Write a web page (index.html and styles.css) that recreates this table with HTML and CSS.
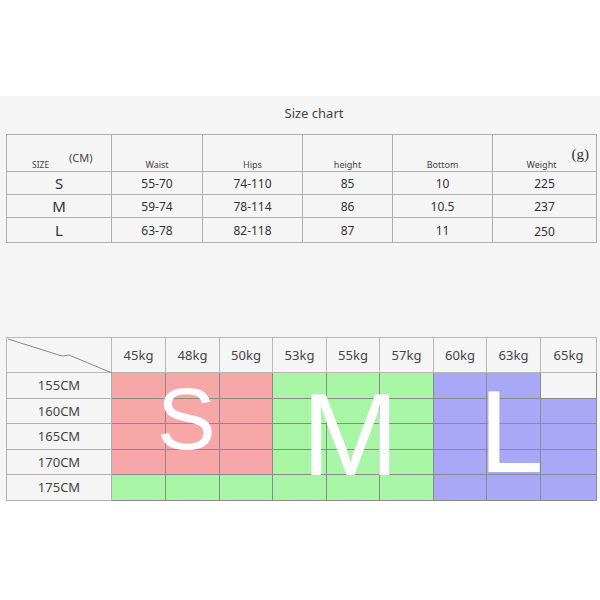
FILE: index.html
```html
<!DOCTYPE html>
<html>
<head>
<meta charset="utf-8">
<link rel="stylesheet" href="styles.css">
</head>
<body>
<div class="band">
  <div class="title">Size chart</div>
  <table class="spec">
    <colgroup>
      <col class="c1"><col class="c2"><col class="c3"><col class="c4"><col class="c5"><col class="c6">
    </colgroup>
    <tr class="head">
      <th><span class="size">SIZE</span><span class="cm">(CM)</span></th>
      <th>Waist</th>
      <th>Hips</th>
      <th>height</th>
      <th>Bottom</th>
      <th><span class="wt">Weight</span><span class="gunit">(g)</span></th>
    </tr>
    <tr class="r1"><td class="sz">S</td><td>55-70</td><td>74-110</td><td>85</td><td>10</td><td>225</td></tr>
    <tr class="r2"><td class="sz">M</td><td>59-74</td><td>78-114</td><td>86</td><td>10.5</td><td>237</td></tr>
    <tr class="r3"><td class="sz">L</td><td>63-78</td><td>82-118</td><td>87</td><td>11</td><td class="low">250</td></tr>
  </table>

  <div class="gridwrap">
    <table class="grid">
      <colgroup>
        <col class="g0"><col class="gk"><col class="gk"><col class="gk2"><col class="gk"><col class="gk2"><col class="gk"><col class="gk2"><col class="gk"><col class="gk3">
      </colgroup>
      <tr class="gh">
        <th class="corner">
          <svg width="105" height="36" viewBox="0 0 105 36"><polyline points="1,1 55,18 62,17 105,35" fill="none" stroke="#888" stroke-width="1"/></svg>
        </th>
        <th>45kg</th><th>48kg</th><th>50kg</th><th>53kg</th><th>55kg</th><th>57kg</th><th>60kg</th><th>63kg</th><th>65kg</th>
      </tr>
      <tr class="gr">
        <td class="lab">155CM</td>
        <td class="cp"></td><td class="cp"></td><td class="cp"></td>
        <td class="cg"></td><td class="cg"></td><td class="cg"></td>
        <td class="cb"></td><td class="cb"></td><td class="ce"></td>
      </tr>
      <tr class="gr">
        <td class="lab">160CM</td>
        <td class="cp"></td><td class="cp"></td><td class="cp"></td>
        <td class="cg"></td><td class="cg"></td><td class="cg"></td>
        <td class="cb"></td><td class="cb"></td><td class="cb"></td>
      </tr>
      <tr class="gr">
        <td class="lab">165CM</td>
        <td class="cp"></td><td class="cp"></td><td class="cp"></td>
        <td class="cg"></td><td class="cg"></td><td class="cg"></td>
        <td class="cb"></td><td class="cb"></td><td class="cb"></td>
      </tr>
      <tr class="gr">
        <td class="lab">170CM</td>
        <td class="cp"></td><td class="cp"></td><td class="cp"></td>
        <td class="cg"></td><td class="cg"></td><td class="cg"></td>
        <td class="cb"></td><td class="cb"></td><td class="cb"></td>
      </tr>
      <tr class="gr">
        <td class="lab">175CM</td>
        <td class="cg"></td><td class="cg"></td><td class="cg"></td>
        <td class="cg"></td><td class="cg"></td><td class="cg"></td>
        <td class="cb"></td><td class="cb"></td><td class="cb"></td>
      </tr>
    </table>
    <span class="big bs">S</span>
    <span class="big bm">M</span>
    <span class="big bl">L</span>
  </div>
</div>
</body>
</html>
```

FILE: styles.css
```css
html, body {
  margin: 0;
  padding: 0;
  background: #ffffff;
}
body {
  width: 600px;
  height: 600px;
  font-family: "Noto Sans", "Open Sans", sans-serif;
  color: #333;
}
.band {
  margin-top: 96px;
  height: 404px;
  background: #f5f5f5;
  padding-left: 6px;
  box-sizing: border-box;
}
.title {
  height: 38px;
  line-height: 34px;
  text-align: center;
  font-size: 13px;
  color: #444;
  padding-left: 22px;
}
table {
  border-collapse: collapse;
  table-layout: fixed;
}
.spec {
  width: 590px;
  border: 1.5px solid #a0a0a0;
}
.spec td, .spec th {
  border: 1px solid #b0b0b0;
  padding: 0;
  text-align: center;
}
.c1 { width: 105px; }
.c2 { width: 91px; }
.c3 { width: 100px; }
.c4 { width: 90px; }
.c5 { width: 100px; }
.c6 { width: 104px; }
.spec .head th {
  height: 36px;
  font-weight: normal;
  font-size: 9px;
  color: #444;
  vertical-align: bottom;
  padding-bottom: 0;
  position: relative;
}
.spec .head th:first-child {
  text-align: left;
}
.size {
  margin-left: 25px;
  font-size: 8.5px;
}
.cm {
  position: absolute;
  left: 62px;
  top: 15px;
  font-size: 11px;
}
.wt {
  margin-right: 6px;
}
.gunit {
  position: absolute;
  right: 7px;
  top: 11px;
  font-family: "Liberation Serif", serif;
  font-size: 15px;
  color: #333;
}
.spec td {
  font-size: 12px;
  color: #333;
  height: 22px;
}
.spec .r3 td { height: 21px; }
.spec td.sz {
  font-size: 15px;
  color: #333;
}
.spec td.low {
  padding-top: 3px;
}

.gridwrap {
  position: relative;
  margin-top: 94px;
  width: 590px;
}
.grid {
  width: 590px;
  border: 1.5px solid #999;
}
.grid td, .grid th {
  border: 1px solid #8a8a8a;
  padding: 0;
  text-align: center;
}
.g0 { width: 105px; }
.gk { width: 54px; }
.gk2 { width: 53px; }
.gk3 { width: 56px; }
.gh th {
  height: 34px;
  font-weight: normal;
  font-size: 13px;
  color: #444;
  background: #f5f5f5;
  border-color: #b8b8b8;
}
.gh th.corner {
  position: relative;
  padding: 0;
}
.corner svg {
  position: absolute;
  left: 0;
  top: 0;
}
.gr td {
  height: 24.5px;
}
.gr td.lab {
  font-size: 13px;
  color: #444;
  background: #f5f5f5;
  border-color: #b0b0b0;
}
td.cp { background: #f7a7a8; }
td.cg { background: #a8f5a6; }
td.cb { background: #a9a8f6; }
td.ce { background: #f5f5f5; }
.big {
  position: absolute;
  color: #ffffff;
  font-family: "Liberation Sans", sans-serif;
  line-height: 1;
}
.bs {
  left: 151px;
  top: 38px;
  font-size: 88px;
}
.bm {
  left: 296px;
  top: 40px;
  font-size: 116px;
}
.bl {
  left: 473px;
  top: 37px;
  font-size: 116px;
}
```
